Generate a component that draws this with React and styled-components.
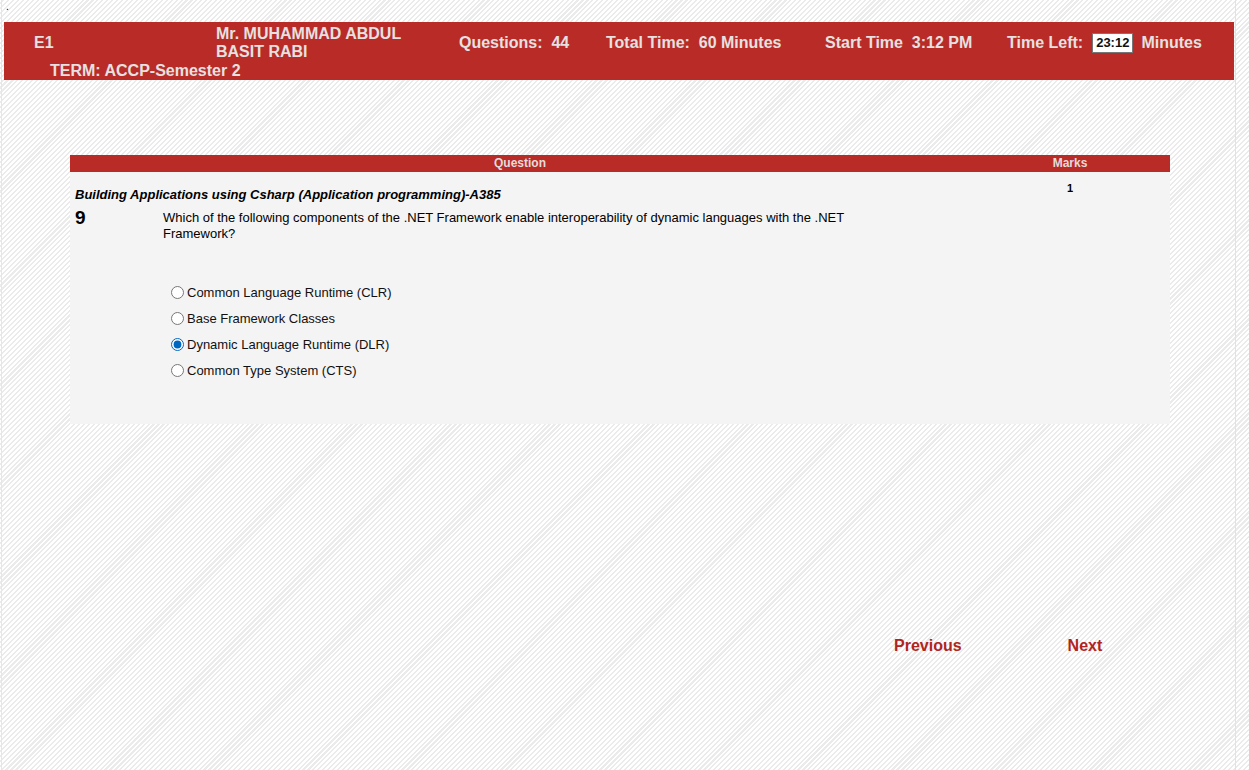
import React from "react";
import styled, { createGlobalStyle } from "styled-components";

const GlobalStyle = createGlobalStyle`
  html, body {
    margin: 0;
    padding: 0;
  }
  body {
    font-family: "Liberation Sans", Arial, sans-serif;
    background-color: #ffffff;
    background-image: repeating-linear-gradient(
      135deg,
      #ffffff 0,
      #ffffff 2px,
      #ebebeb 2px,
      #ebebeb 3.5px
    );
    min-height: 770px;
  }
`;

const Page = styled.div`
  width: 1235px;
  min-height: 770px;
  margin-left: 1px;
  border-left: 1px solid #e6e6e6;
  border-right: 1px solid #e2e2e2;
  box-sizing: border-box;
`;

const Dot = styled.div`
  height: 22px;
  padding-left: 4px;
  font-size: 10px;
  line-height: 14px;
  color: #000;
`;

const Header = styled.header`
  margin: 0 1px 0 2px;
  height: 58px;
  background: #b92b27;
  color: #e6e1e1;
  font-weight: bold;
  font-size: 16px;
  display: grid;
  grid-template-columns: 212px 243px 147px 219px 182px 1fr;
  grid-template-rows: 40px 18px;
`;

const HeadCell = styled.div`
  display: flex;
  align-items: center;
  padding-left: ${(p) => p.$pad || 0}px;
  padding-top: 1px;
  padding-right: ${(p) => (p.$wrap ? 40 : 0)}px;
  line-height: 18px;
  white-space: ${(p) => (p.$wrap ? "normal" : "pre")};
`;

const TermCell = styled.div`
  grid-column: 1 / -1;
  padding-left: 46px;
  line-height: 18px;
`;

const Clock = styled.span`
  display: inline-block;
  background: #fff;
  color: #111;
  border: 1px solid #777;
  font-size: 13px;
  line-height: 18px;
  padding: 0 3px;
  margin: 0 8px 0 9px;
`;

const Table = styled.section`
  width: 1100px;
  margin: 75px 0 0 68px;
`;

const TableHead = styled.div`
  display: grid;
  grid-template-columns: 900px 200px;
  background: #b92b27;
  color: #e3dcdc;
  font-size: 12px;
  font-weight: bold;
  height: 17px;
  line-height: 17px;
  text-align: center;
`;

const TableBody = styled.div`
  display: grid;
  grid-template-columns: 900px 200px;
  background: #f4f4f4;
  height: 252px;
`;

const QuestionCell = styled.div`
  padding: 15px 0 0 5px;
`;

const Subject = styled.div`
  font-size: 13px;
  font-weight: bold;
  font-style: italic;
  line-height: 16px;
  color: #000;
`;

const QuestionRow = styled.div`
  display: grid;
  grid-template-columns: 88px 700px;
  margin-top: 4px;
  align-items: start;
`;

const Number = styled.div`
  font-size: 19px;
  font-weight: bold;
  line-height: 22px;
`;

const Text = styled.div`
  font-size: 13px;
  line-height: 16px;
  padding-top: 3px;
  color: #000;
`;

const Options = styled.div`
  margin: 42px 0 0 96px;
  display: flex;
  flex-direction: column;
  gap: 9px;
`;

const Option = styled.label`
  display: flex;
  align-items: center;
  font-size: 13px;
  line-height: 17px;
  color: #111;
`;

const Radio = styled.input`
  width: 13px;
  height: 13px;
  margin: 0 3px 0 0;
  accent-color: #0067c0;
`;

const MarksCell = styled.div`
  text-align: center;
  font-size: 11px;
  font-weight: bold;
  padding-top: 10px;
`;

const Nav = styled.nav`
  display: flex;
  margin: 213px 0 0 892px;
  gap: 106px;
`;

const NavLink = styled.a`
  color: #b02521;
  font-weight: bold;
  font-size: 16px;
  text-decoration: none;
  cursor: pointer;
`;

const options = [
  "Common Language Runtime (CLR)",
  "Base Framework Classes",
  "Dynamic Language Runtime (DLR)",
  "Common Type System (CTS)",
];

export default function App() {
  return (
    <>
      <GlobalStyle />
      <Page>
        <Dot>.</Dot>
        <Header>
          <HeadCell $pad={30}>E1</HeadCell>
          <HeadCell $wrap>Mr. MUHAMMAD ABDUL BASIT RABI</HeadCell>
          <HeadCell>Questions:  44</HeadCell>
          <HeadCell>Total Time:  60 Minutes</HeadCell>
          <HeadCell>Start Time  3:12 PM</HeadCell>
          <HeadCell>
            Time Left:<Clock>23:12</Clock>Minutes
          </HeadCell>
          <TermCell>TERM: ACCP-Semester 2</TermCell>
        </Header>

        <Table>
          <TableHead>
            <div>Question</div>
            <div>Marks</div>
          </TableHead>
          <TableBody>
            <QuestionCell>
              <Subject>
                Building Applications using Csharp (Application programming)-A385
              </Subject>
              <QuestionRow>
                <Number>9</Number>
                <Text>
                  Which of the following components of the .NET Framework enable
                  interoperability of dynamic languages with the .NET Framework?
                </Text>
              </QuestionRow>
              <Options>
                {options.map((o, i) => (
                  <Option key={o}>
                    <Radio type="radio" name="answer" defaultChecked={i === 2} />
                    {o}
                  </Option>
                ))}
              </Options>
            </QuestionCell>
            <MarksCell>1</MarksCell>
          </TableBody>
        </Table>

        <Nav>
          <NavLink>Previous</NavLink>
          <NavLink>Next</NavLink>
        </Nav>
      </Page>
    </>
  );
}
